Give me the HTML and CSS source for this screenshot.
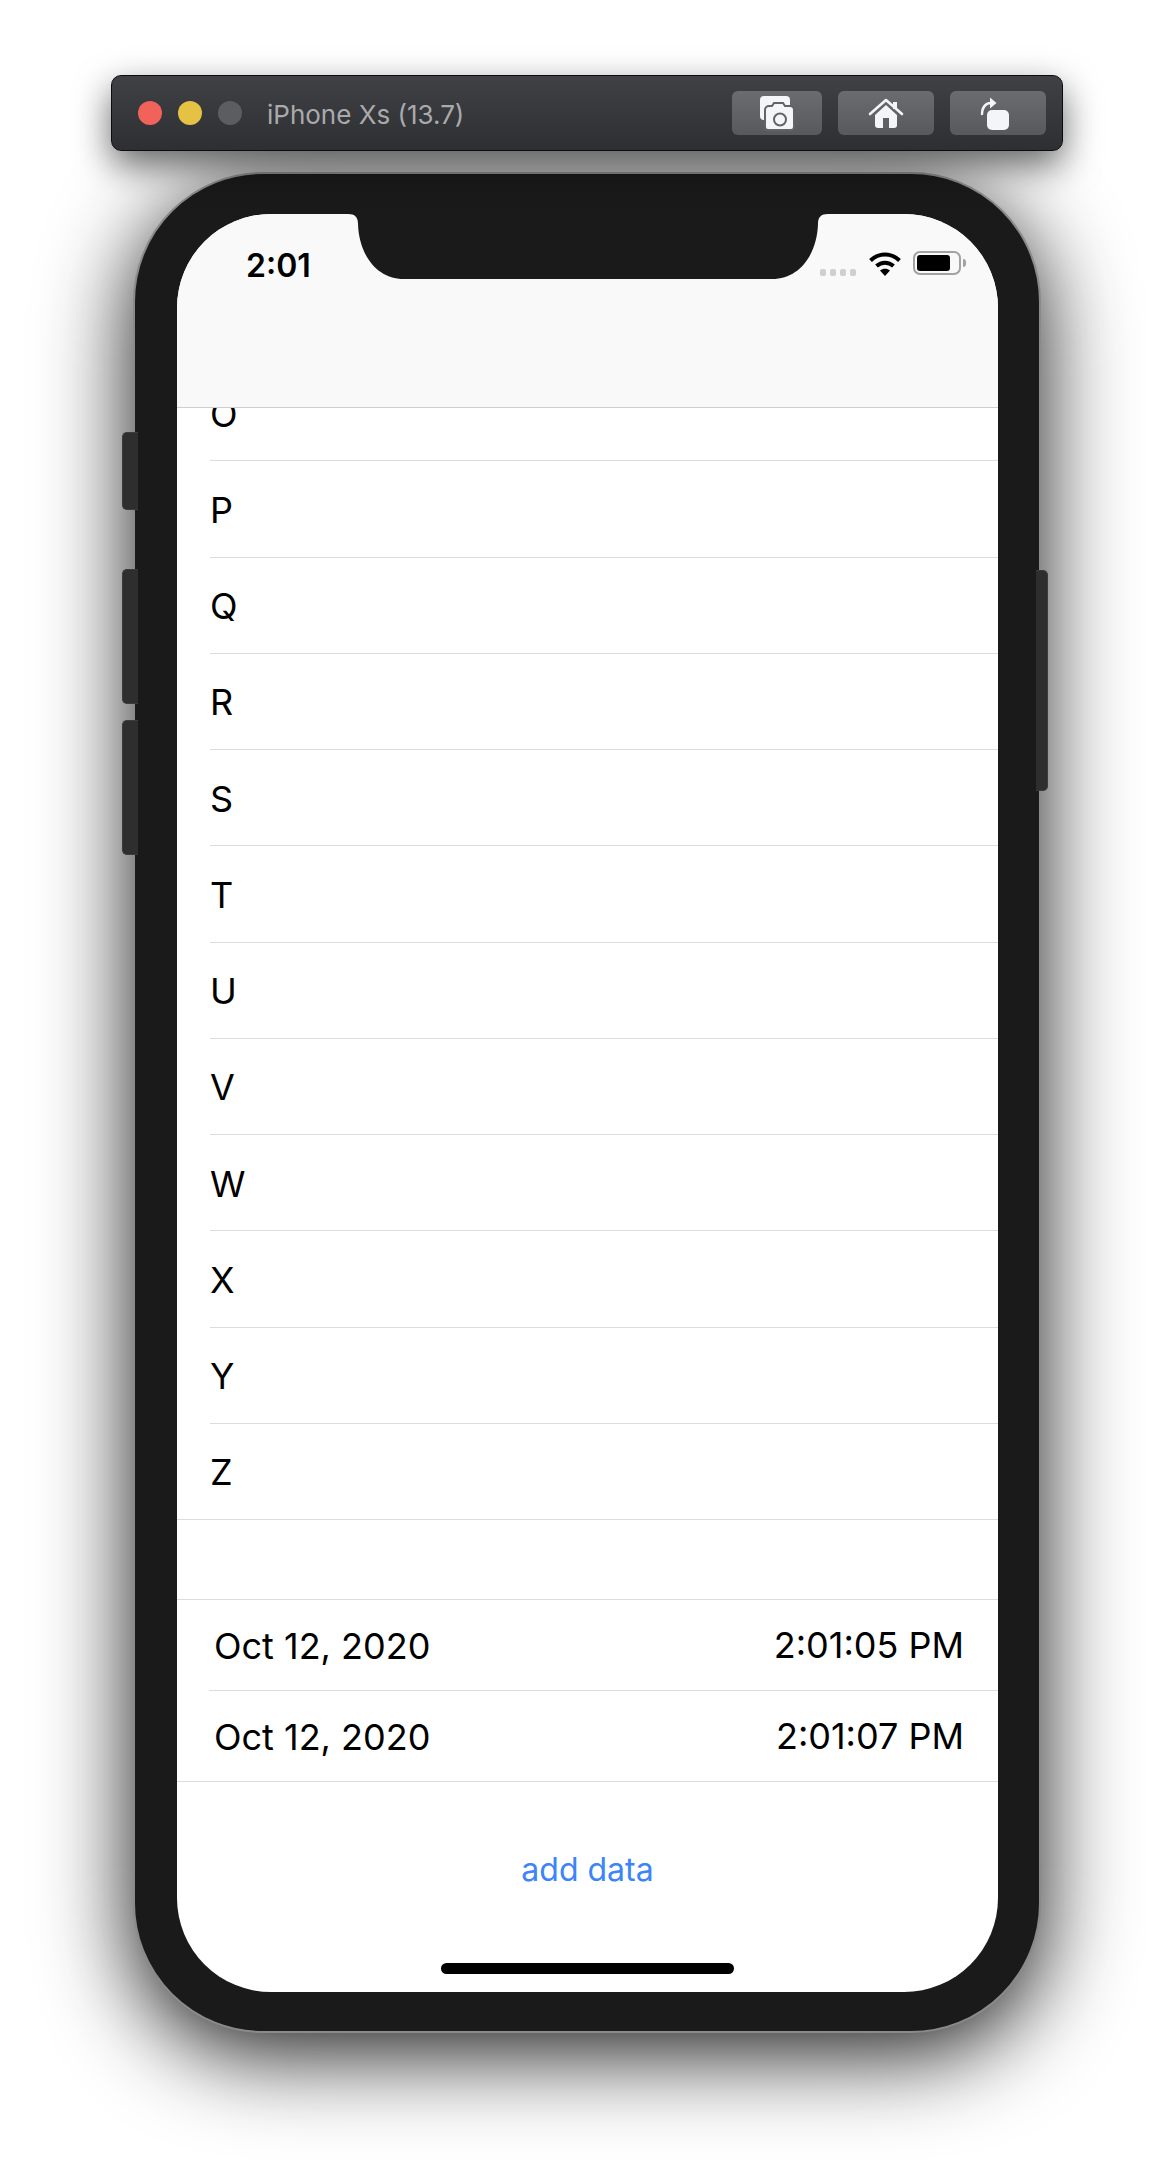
FILE: index.html
```html
<!DOCTYPE html>
<html lang="en">
<head>
    <meta charset="UTF-8">
    <title>iPhone Xs (13.7)</title>
    <link rel="stylesheet" href="styles.css">
</head>
<body>
    <div class="simulator">
        <div class="toolbar">
            <span class="light light-red"></span>
            <span class="light light-yellow"></span>
            <span class="light light-grey"></span>
            <span class="device-name">iPhone Xs (13.7)</span>
            <div class="tools">
                <div class="tool tool-shot">
                    <svg width="40" height="40" viewBox="0 0 40 40">
                        <rect x="3" y="3" width="30" height="24" rx="4" fill="#f4f5f8"/>
                        <path d="M12 13h3l2-3h9l2 3h5a4 4 0 0 1 4 4v17a3 3 0 0 1-3 3H11a3 3 0 0 1-3-3V17a4 4 0 0 1 4-4z" fill="#f4f5f8" stroke="#626367" stroke-width="2"/>
                        <circle cx="23" cy="26.5" r="6" fill="none" stroke="#626367" stroke-width="2"/>
                    </svg>
                </div>
                <div class="tool">
                    <svg width="40" height="40" viewBox="0 0 40 40">
                        <path d="M4 21L20 7l16 14" fill="none" stroke="#f4f5f8" stroke-width="2.6" stroke-linecap="round" stroke-linejoin="round"/>
                        <rect x="27" y="9" width="4" height="7" fill="#f4f5f8"/>
                        <path d="M20 12l11 10v10a3 3 0 0 1-3 3H12a3 3 0 0 1-3-3V22z" fill="#f4f5f8"/>
                        <rect x="17" y="25" width="6" height="10" fill="#5f6064"/>
                    </svg>
                </div>
                <div class="tool">
                    <svg width="40" height="40" viewBox="0 0 40 40">
                        <path d="M4 21C4 14 8 10 13 10" fill="none" stroke="#f4f5f8" stroke-width="2.4" stroke-linecap="round"/>
                        <path d="M12 4.500L18.500 10 12 15.500z" fill="#f4f5f8"/>
                        <rect x="9" y="17" width="22" height="20" rx="5" fill="#f4f5f8"/>
                    </svg>
                </div>
            </div>
        </div>

        <div class="phone">
            <span class="side-btn side-mute"></span>
            <span class="side-btn side-up"></span>
            <span class="side-btn side-down"></span>
            <span class="side-btn side-power"></span>

            <div class="screen">
                <svg class="notch" width="480" height="65" viewBox="0 0 480 65">
                    <path d="M0 0C7 0 10 3 10 10C11 40 28 65 56 65H424C452 65 469 40 470 10C470 3 473 0 480 0Z" fill="#1a1a1a"/>
                </svg>

                <div class="nav">
                    <div class="status">
                        <span class="clock">2:01</span>
                        <div class="status-icons">
                            <div class="signal"><i></i><i></i><i></i><i></i></div>
                            <svg class="wifi" width="34" height="26" viewBox="0 0 34 26">
                                <path d="M2.500 9.500C11 1.500 23 1.500 31.500 9.500" fill="none" stroke="#000" stroke-width="4"/>
                                <path d="M8.500 15C13.500 10.500 20.500 10.500 25.500 15" fill="none" stroke="#000" stroke-width="4"/>
                                <path d="M12 19.500C15 17 19 17 22 19.500L17 25z" fill="#000"/>
                            </svg>
                            <div class="battery"><span class="battery-level"></span></div>
                            <span class="battery-nub"></span>
                        </div>
                    </div>
                </div>

                <div class="list">
                    <div class="rows">
                        <div class="row">O</div>
                        <div class="row">P</div>
                        <div class="row">Q</div>
                        <div class="row">R</div>
                        <div class="row">S</div>
                        <div class="row">T</div>
                        <div class="row">U</div>
                        <div class="row">V</div>
                        <div class="row">W</div>
                        <div class="row">X</div>
                        <div class="row">Y</div>
                        <div class="row row-last">Z</div>
                    </div>
                </div>

                <div class="entries">
                    <div class="entry">
                        <span class="entry-date">Oct 12, 2020</span>
                        <span class="entry-time">2:01:05 PM</span>
                    </div>
                    <div class="entry">
                        <span class="entry-date">Oct 12, 2020</span>
                        <span class="entry-time">2:01:07 PM</span>
                    </div>
                </div>

                <div class="action">
                    <span class="add-data">add data</span>
                </div>
                <span class="home-bar"></span>
            </div>
        </div>
    </div>
</body>
</html>
```

FILE: styles.css
```css
body {
    margin: 0;
    height: 2184px;
    overflow: hidden;
    background-color: #fff;
    font-family: Inter, "Noto Sans", sans-serif;
    color: #000;
}
.simulator {
    padding-top: 75px;
}

/* window title bar */
.toolbar {
    position: relative;
    z-index: 2;
    display: flex;
    align-items: center;
    box-sizing: border-box;
    width: 952px;
    height: 76px;
    margin-left: 111px;
    padding: 0 16px 0 26px;
    background: linear-gradient(#404145, #2e2f33);
    border: 1px solid #0c0c0d;
    border-radius: 10px;
    box-shadow: 0 14px 36px rgba(0,0,0,0.6);
}
.light {
    width: 24px;
    height: 24px;
    margin-right: 16px;
    border-radius: 50%;
}
.light-red { background-color: #f1625a; }
.light-yellow { background-color: #e6c244; }
.light-grey { background-color: #5c5d60; }
.device-name {
    margin-left: 9px;
    padding-top: 2px;
    font-size: 26px;
    color: #a9aaac;
}
.tools {
    display: flex;
    gap: 16px;
    margin-left: auto;
}
.tool {
    display: flex;
    align-items: center;
    justify-content: center;
    width: 96px;
    height: 44px;
    background: linear-gradient(#6b6c70, #58595d);
    border-radius: 6px;
}
.tool-shot {
    width: 90px;
}

/* device body */
.phone {
    position: relative;
    display: flex;
    box-sizing: border-box;
    width: 908px;
    height: 1861px;
    margin: 21px 0 0 133px;
    padding: 40px 41px 39px 42px;
    background-color: #1a1a1a;
    border: 2px solid #8a8a8a;
    border-radius: 130px;
    box-shadow: 0 20px 90px rgba(0,0,0,0.9);
}
.side-btn {
    position: absolute;
    box-sizing: border-box;
    width: 16px;
    background-color: #2e2e2e;
    border: 1px solid #3c3c3c;
}
.side-mute { left: -13px; top: 258px; height: 78px; border-right: 0; border-radius: 5px 0 0 5px; }
.side-up { left: -13px; top: 395px; height: 135px; border-right: 0; border-radius: 5px 0 0 5px; }
.side-down { left: -13px; top: 546px; height: 135px; border-right: 0; border-radius: 5px 0 0 5px; }
.side-power { right: -9px; top: 396px; width: 12px; height: 221px; border-left: 0; border-radius: 0 5px 5px 0; }

.screen {
    position: relative;
    display: flex;
    flex-direction: column;
    flex: 1;
    overflow: hidden;
    background-color: #fff;
    border-radius: 94px;
}
.notch {
    position: absolute;
    left: 171px;
    top: 0;
}

/* status and nav bar */
.nav {
    flex: none;
    box-sizing: border-box;
    height: 194px;
    background-color: #f9f9f9;
    border-bottom: 1px solid #cfcfd1;
}
.status {
    display: flex;
    align-items: flex-start;
    justify-content: space-between;
    padding: 34px 32px 0 69px;
}
.clock {
    font-size: 32px;
    font-weight: 600;
    line-height: 36px;
}
.status-icons {
    display: flex;
    align-items: flex-start;
    padding-top: 3px;
}
.signal {
    display: flex;
    gap: 3.500px;
    margin: 18px 12px 0 0;
}
.signal i {
    width: 6.500px;
    height: 6.500px;
    background-color: #cfcfcf;
    border-radius: 2px;
}
.wifi {
    margin-right: 11px;
}
.battery {
    box-sizing: border-box;
    width: 48px;
    height: 24px;
    padding: 2px;
    border: 2px solid #a2a2a2;
    border-radius: 7px;
}
.battery-level {
    display: block;
    width: 33px;
    height: 16px;
    background-color: #000;
    border-radius: 3px;
}
.battery-nub {
    width: 3px;
    height: 8px;
    margin: 8px 0 0 2px;
    background-color: #a2a2a2;
    border-radius: 0 3px 3px 0;
}

/* scrolled list */
.list {
    flex: none;
    height: 1113px;
    overflow: hidden;
}
.rows {
    margin-top: -43px;
}
.row {
    display: flex;
    align-items: center;
    box-sizing: border-box;
    height: 96.250px;
    margin-left: 33px;
    padding-top: 2px;
    font-size: 36px;
    border-bottom: 1px solid #dcdcde;
}
.row-last {
    margin-left: 0;
    padding-left: 33px;
}

/* saved entries */
.entries {
    flex: none;
    margin-top: 78px;
    border-top: 1px solid #dcdcde;
}
.entry {
    display: flex;
    align-items: center;
    justify-content: space-between;
    box-sizing: border-box;
    height: 91px;
    padding: 2px 34px 0 37px;
    font-size: 36px;
    border-bottom: 1px solid #dcdcde;
}
.entry:first-child {
    border-image: linear-gradient(to right, transparent 33px, #dcdcde 33px) 1;
}
.entry-time {
    padding-bottom: 3px;
}

.action {
    display: flex;
    flex: 1;
    justify-content: center;
    padding-top: 70px;
}
.add-data {
    font-size: 32px;
    line-height: 36px;
    color: #3c84f7;
}
.home-bar {
    position: absolute;
    left: 264px;
    bottom: 18px;
    width: 293px;
    height: 11px;
    background-color: #000;
    border-radius: 6px;
}
```
